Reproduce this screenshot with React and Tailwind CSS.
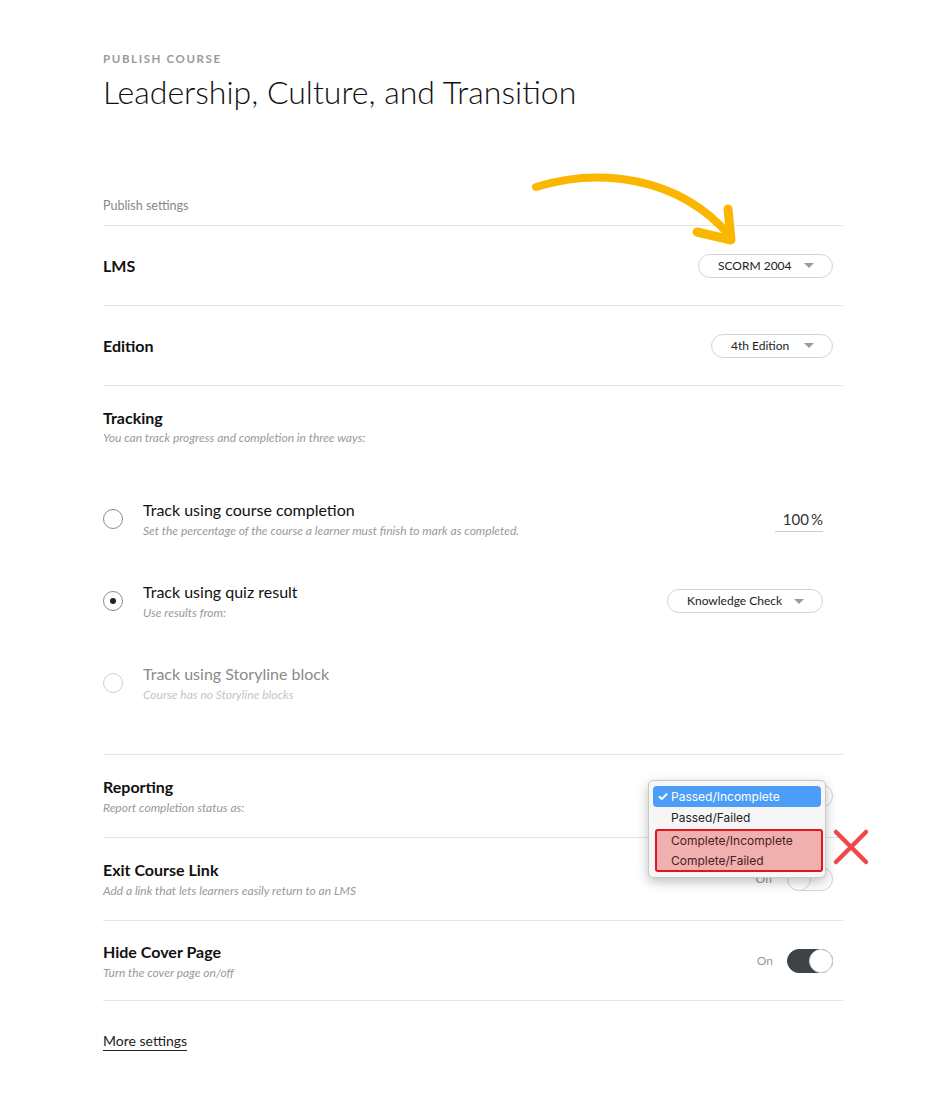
import React from "react";

const font = { fontFamily: "Lato, 'Open Sans', sans-serif" };

function Select({ label, className = "" }) {
  return (
    <div
      className={`flex items-center justify-between whitespace-nowrap h-[24px] rounded-full border border-[#d4d4d4] bg-white pl-[19px] pr-[18px] text-[12px] text-[#222] ${className}`}
    >
      <span>{label}</span>
      <span className="ml-[10px] w-0 h-0 border-l-[5px] border-r-[5px] border-t-[5px] border-l-transparent border-r-transparent border-t-[#9a9a9a]" />
    </div>
  );
}

function Row({ title, sub, children, h }) {
  return (
    <div className={`flex items-center justify-between border-b border-[#e5e5e5] ${h}`}>
      <div>
        <div className="text-[16px] font-bold text-[#111] leading-[20px]">{title}</div>
        {sub && <div className="text-[12px] italic text-[#999] leading-[15px] mt-[3px]">{sub}</div>}
      </div>
      {children}
    </div>
  );
}

function Radio({ checked, faded }) {
  return (
    <div
      className={`w-[20px] h-[20px] rounded-full border flex items-center justify-center shrink-0 ${
        faded ? "border-[#d0d0d0]" : "border-[#8a8a8a]"
      }`}
    >
      {checked && <div className="w-[6px] h-[6px] rounded-full bg-[#222]" />}
    </div>
  );
}

function Toggle({ on }) {
  return (
    <div
      className={`relative w-[46px] h-[24px] rounded-full border ${
        on ? "bg-[#3d4347] border-[#3d4347]" : "bg-white border-[#d4d4d4]"
      }`}
    >
      <div
        className={`absolute top-[-1px] w-[24px] h-[24px] rounded-full bg-white border ${
          on ? "right-[-1px] border-[#d4d4d4]" : "left-[-1px] border-[#d4d4d4]"
        }`}
      />
    </div>
  );
}

export default function App() {
  return (
    <div className="min-h-[1096px] bg-white text-[#111]" style={font}>
      <div className="ml-[103px] w-[740px] pt-[52px] relative">
        <div className="text-[11.5px] font-bold tracking-[0.14em] text-[#9a9a9a] leading-[14px]">
          PUBLISH COURSE
        </div>
        <h1 className="text-[32px] font-light leading-[40px] mt-[6px] text-[#111]">
          Leadership, Culture, and Transition
        </h1>

        <div className="mt-[87px] text-[12.5px] text-[#888] leading-[14px] pb-[12px] border-b border-[#e5e5e5]">
          Publish settings
        </div>

        <Row title="LMS" h="h-[80px]">
          <Select label="SCORM 2004" className="mr-[10px] w-[135px]" />
        </Row>
        <Row title="Edition" h="h-[80px]">
          <Select label="4th Edition" className="mr-[10px] w-[122px]" />
        </Row>

        <div className="border-b border-[#e5e5e5] pt-[22px] pb-[52px]">
          <div className="text-[16px] font-bold leading-[20px]">Tracking</div>
          <div className="text-[12px] italic text-[#999] leading-[15px] mt-[2px]">
            You can track progress and completion in three ways:
          </div>

          <div className="mt-[55px] flex items-center">
            <Radio />
            <div className="ml-[20px] flex-1">
              <div className="text-[16px] leading-[20px] text-[#111]">Track using course completion</div>
              <div className="text-[12px] italic text-[#999] leading-[15px] mt-[3px]">
                Set the percentage of the course a learner must finish to mark as completed.
              </div>
            </div>
            <div className="mr-[20px] w-[48px] border-b border-[#ccc] text-right text-[15px] text-[#333] leading-[20px] pb-[2px] mt-[3px]">
              100<span className="ml-[2px]">%</span>
            </div>
          </div>

          <div className="mt-[44px] flex items-center">
            <Radio checked />
            <div className="ml-[20px] flex-1">
              <div className="text-[16px] leading-[20px] text-[#111]">Track using quiz result</div>
              <div className="text-[12px] italic text-[#999] leading-[15px] mt-[3px]">Use results from:</div>
            </div>
            <Select label="Knowledge Check" className="mr-[20px] w-[156px]" />
          </div>

          <div className="mt-[44px] flex items-center">
            <Radio faded />
            <div className="ml-[20px] flex-1">
              <div className="text-[16px] leading-[20px] text-[#8a8a8a]">Track using Storyline block</div>
              <div className="text-[12px] italic text-[#c4c4c4] leading-[15px] mt-[3px]">
                Course has no Storyline blocks
              </div>
            </div>
          </div>
        </div>

        <Row title="Reporting" sub="Report completion status as:" h="h-[83px]">
          <div className="relative mr-[10px]">
            {/* the closed select, hidden behind the open menu */}
            <div className="h-[24px] w-[150px] rounded-full border border-[#d4d4d4] bg-white" />
            {/* native-looking popup menu */}
            <div
              className="absolute left-[-35px] top-[-4px] w-[178px] rounded-[5px] border border-[#c8c8c8] bg-[#f6f6f6] shadow-[0_4px_12px_rgba(0,0,0,0.25)] pt-[5px] pb-[5px] px-[4px] text-[12px] leading-[21px] text-[#222] z-10"
              style={{ fontFamily: "Inter, 'Open Sans', sans-serif" }}
            >
              <div className="rounded-[4px] bg-[#4c9df8] text-white pl-[4px] h-[21px] leading-[21px] flex items-center">
                <span className="w-[14px] text-[13px] font-bold">✓</span>
                <span>Passed/Incomplete</span>
              </div>
              <div className="pl-[18px] h-[21px]">Passed/Failed</div>
              <div className="relative mt-[1px] ml-[2px] mr-[-2px] rounded-[3px] border-2 border-[#e3141b] bg-[#f1b0b0] h-[43px] pl-[14px] text-[#4a2020]">
                <div className="leading-[19px]">Complete/Incomplete</div>
                <div className="leading-[21px]">Complete/Failed</div>
              </div>
            </div>
            {/* red X */}
            <svg className="absolute left-[148px] top-[44px] z-10" width="40" height="38" viewBox="0 0 40 38">
              <path d="M5 4 L35 34 M35 4 L5 34" stroke="#f04848" strokeWidth="4.5" strokeLinecap="round" />
            </svg>
          </div>
        </Row>

        <Row title="Exit Course Link" sub="Add a link that lets learners easily return to an LMS" h="h-[83px]">
          <div className="flex items-center mr-[10px]">
            <span className="text-[12px] text-[#999] mr-[14px]">Off</span>
            <Toggle />
          </div>
        </Row>

        <Row title="Hide Cover Page" sub="Turn the cover page on/off" h="h-[80px]">
          <div className="flex items-center mr-[10px]">
            <span className="text-[12px] text-[#999] mr-[14px]">On</span>
            <Toggle on />
          </div>
        </Row>

        <div className="mt-[27px]">
          <span className="text-[14px] text-[#222] border-b border-[#222] pb-[1px] leading-[18px]">More settings</span>
        </div>

        {/* yellow arrow */}
        <svg
          className="absolute left-[425px] top-[170px] pointer-events-none"
          width="220"
          height="85"
          viewBox="0 0 220 85"
        >
          <path
            d="M8 17 C 70 -2, 150 5, 202 66"
            fill="none"
            stroke="#fbb700"
            strokeWidth="8"
            strokeLinecap="round"
          />
          <path
            d="M200 39 L203 70 L169 62"
            fill="none"
            stroke="#fbb700"
            strokeWidth="9"
            strokeLinecap="round"
            strokeLinejoin="round"
          />
        </svg>
      </div>
    </div>
  );
}
